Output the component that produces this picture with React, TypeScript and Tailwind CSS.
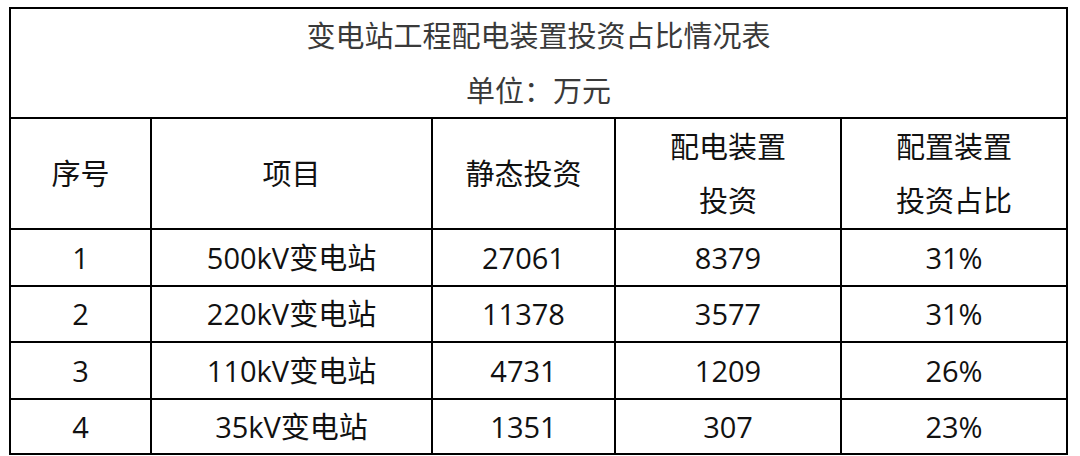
import React from "react";

const rows = [
  ["1", "500kV变电站", "27061", "8379", "31%", "h-[57px]"],
  ["2", "220kV变电站", "11378", "3577", "31%", "h-[56px]"],
  ["3", "110kV变电站", "4731", "1209", "26%", "h-[57px]"],
  ["4", "35kV变电站", "1351", "307", "23%", "h-[55px]"],
];

const cell = "flex items-center justify-center border-r-2 border-b-2 border-black text-center";

export default function App() {
  return (
    <div className="w-[1080px] h-[456px] bg-white overflow-hidden pt-[7px] pl-[9px]" style={{ fontFamily: '"Open Sans", "Noto Sans CJK SC", sans-serif' }}>
      <div className="w-[1059px] border-l-2 border-t-2 border-black text-[29px] text-[#111]">
        <div className={`${cell} h-[110px] flex-col leading-[55px] text-[#3a3a3a]`}>
          <div>变电站工程配电装置投资占比情况表</div>
          <div>单位：万元</div>
        </div>
        <div className="grid grid-cols-[141px_281px_183px_226px_226px]">
          <div className={`${cell} h-[111px]`}>序号</div>
          <div className={`${cell} h-[111px]`}>项目</div>
          <div className={`${cell} h-[111px]`}>静态投资</div>
          <div className={`${cell} h-[111px] flex-col leading-[54px]`}>
            <div>配电装置</div>
            <div>投资</div>
          </div>
          <div className={`${cell} h-[111px] flex-col leading-[54px]`}>
            <div>配置装置</div>
            <div>投资占比</div>
          </div>
          {rows.map((r) => (
            <React.Fragment key={r[0]}>
              <div className={`${cell} ${r[5]}`}>{r[0]}</div>
              <div className={`${cell} ${r[5]}`}>{r[1]}</div>
              <div className={`${cell} ${r[5]}`}>{r[2]}</div>
              <div className={`${cell} ${r[5]}`}>{r[3]}</div>
              <div className={`${cell} ${r[5]}`}>{r[4]}</div>
            </React.Fragment>
          ))}
        </div>
      </div>
    </div>
  );
}
